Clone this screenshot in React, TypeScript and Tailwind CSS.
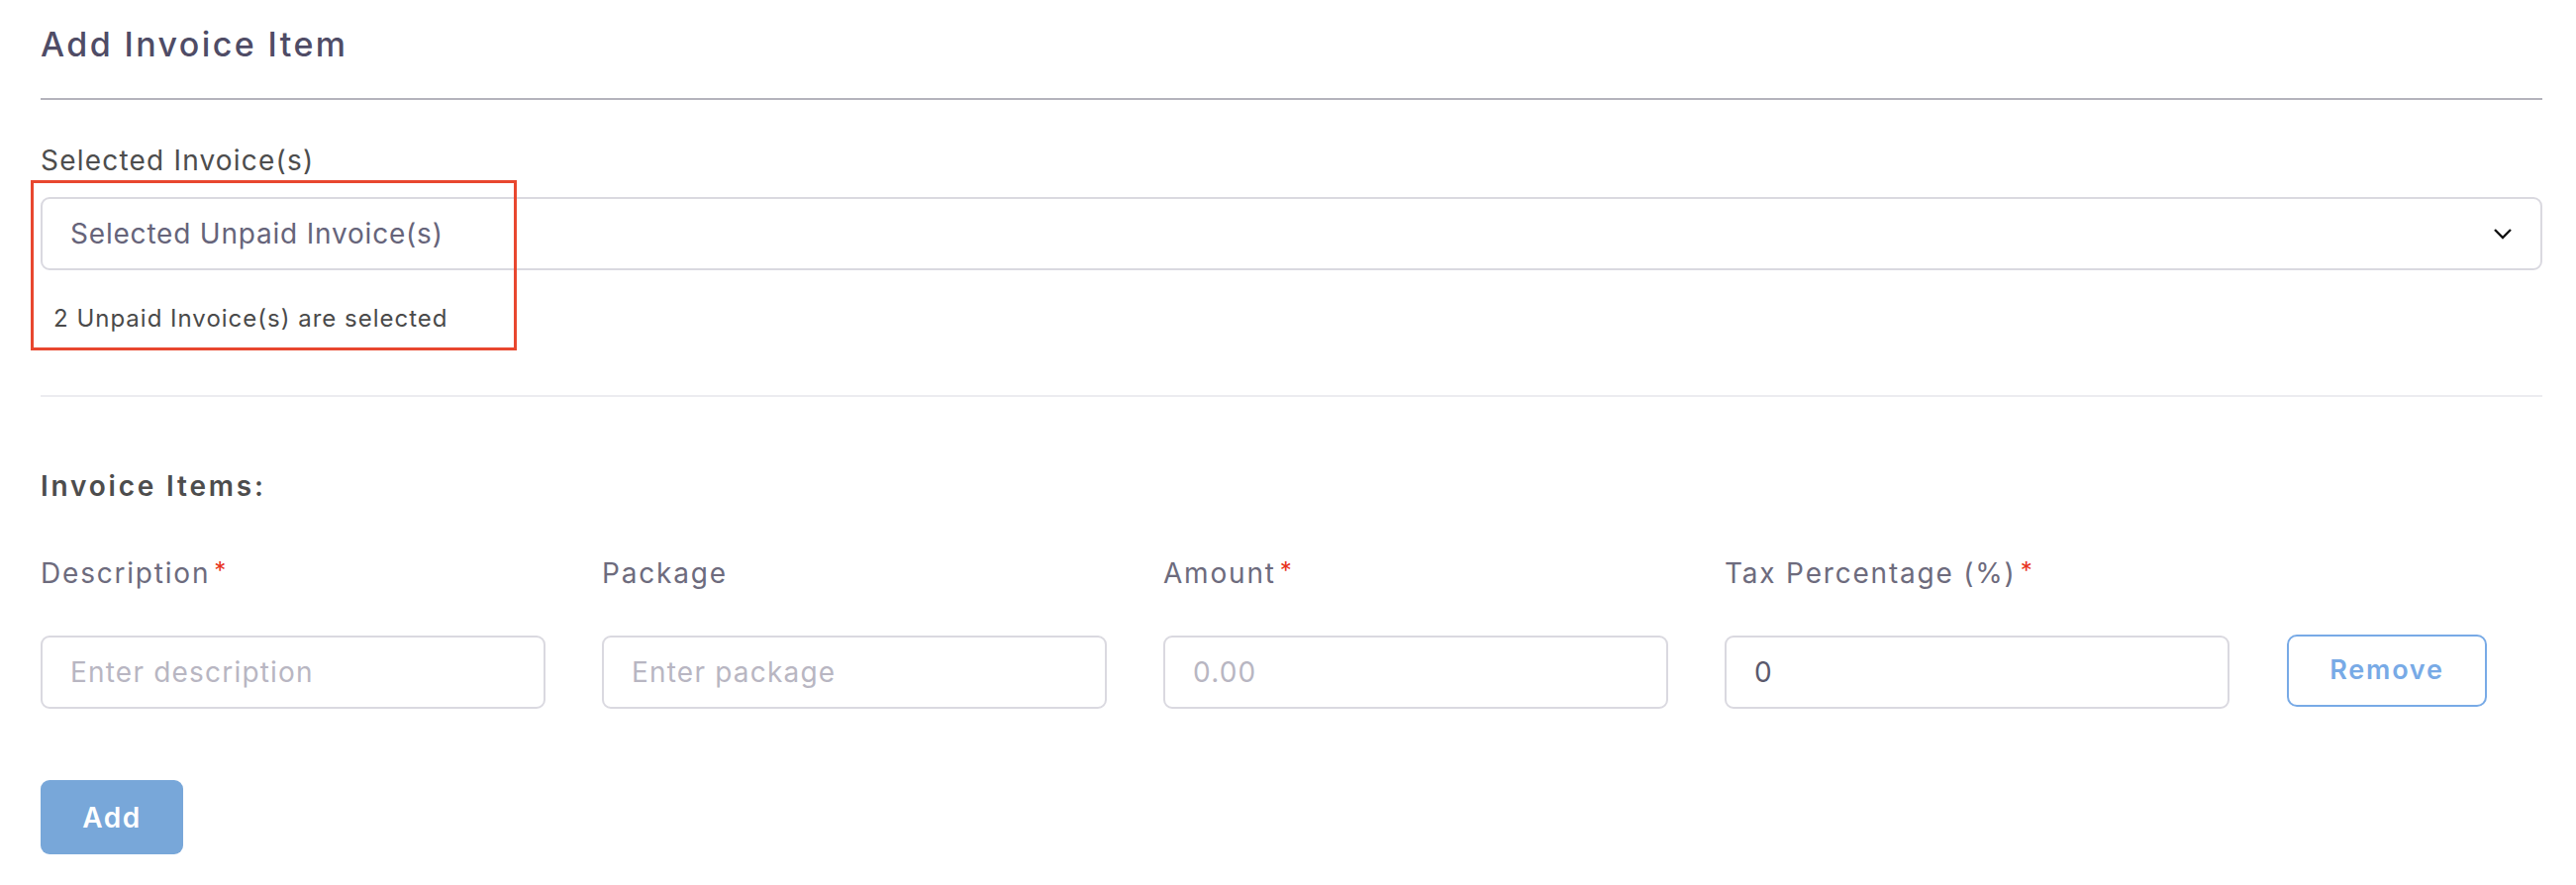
import React from "react";

// Add Invoice Item form
const Label = ({ text, required }: { text: string; required?: boolean }) => (
	<div className="flex h-[34px] items-start text-[28px] leading-[34px] tracking-[1.8px] text-[#6d6b7d]">
		<span>{text}</span>
		{required && <span className="ml-[4px] text-[24px] leading-[30px] text-[#e8341c]">*</span>}
	</div>
);

const Field = ({ placeholder, value }: { placeholder: string; value?: string }) => (
	<input
		readOnly
		defaultValue={value}
		placeholder={placeholder}
		className="mt-[46px] h-[74px] w-full rounded-[9px] border-2 border-[#dad9e0] bg-white pl-[28px] text-[28px] tracking-[1.2px] text-[#5b596d] outline-none placeholder:text-[#b8b6c2]"
	/>
);

const columns = [
	{ label: "Description", required: true, placeholder: "Enter description" },
	{ label: "Package", required: false, placeholder: "Enter package" },
	{ label: "Amount", required: true, placeholder: "0.00" },
	{ label: "Tax Percentage (%)", required: true, placeholder: "", value: "0" },
];

export default function App() {
	return (
		<div className="relative min-h-screen bg-white pt-[25px] pl-[41px] pr-[34px] font-['Inter','Open_Sans',sans-serif]">
			<h1 className="h-[40px] text-[34px] font-medium leading-[40px] tracking-[2.4px] text-[#4f4c66]">
				Add Invoice Item
			</h1>
			<div className="mt-[34px] h-[2px] bg-[#b4b3bc]" />

			{/* Selected invoices */}
			<div className="mt-[44px] h-[34px] text-[28px] leading-[34px] tracking-[1.2px] text-[#4d4d4d]">
				Selected Invoice(s)
			</div>
			<div className="mt-[20px] flex h-[74px] items-center justify-between rounded-[9px] border-2 border-[#dad9e0] pl-[28px] pr-[28px]">
				<span className="text-[28px] tracking-[0.8px] text-[#66647a]">Selected Unpaid Invoice(s)</span>
				<svg width="20" height="12" viewBox="0 0 20 12" fill="none">
					<polyline points="2,2 10,10 18,2" stroke="#111" strokeWidth="2.4" />
				</svg>
			</div>
			<div className="mt-[35px] h-[28px] pl-[13px] text-[24px] leading-[28px] tracking-[1px] text-[#4a4a4a]">
				2 Unpaid Invoice(s) are selected
			</div>
			<div className="mt-[63px] h-[2px] bg-[#ececf0]" />

			{/* Invoice items */}
			<div className="mt-[73px] h-[34px] text-[28px] font-semibold leading-[34px] tracking-[2.8px] text-[#4d4d4d]">
				Invoice Items:
			</div>
			<div className="mt-[54px] flex items-end gap-[57px]">
				{columns.map((c) => (
					<div key={c.label} className="flex w-[510px] flex-col">
						<Label text={c.label} required={c.required} />
						<Field placeholder={c.placeholder} value={c.value} />
					</div>
				))}
				<button className="mb-[2px] ml-[1px] h-[73px] w-[202px] rounded-[10px] border-2 border-[#78aae6] bg-white text-[27px] font-semibold tracking-[1.8px] text-[#78aae6]">
					Remove
				</button>
			</div>
			<button className="mt-[72px] h-[75px] w-[144px] rounded-[9px] bg-[#78a7d9] text-[28px] font-semibold tracking-[1.5px] text-white">
				Add
			</button>

			{/* highlight box */}
			<div className="absolute left-[31px] top-[182px] h-[172px] w-[491px] border-[3px] border-[#e8472f]" />
		</div>
	);
}
